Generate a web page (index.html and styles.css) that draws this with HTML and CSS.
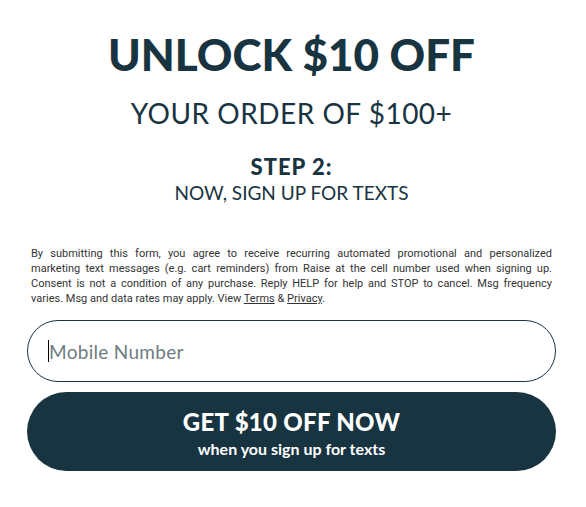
FILE: index.html
```html
<!DOCTYPE html>
<html>
<head>
<meta charset="utf-8">
<link rel="stylesheet" href="styles.css">
</head>
<body>
<div class="popup">
  <h1 class="title">UNLOCK $10 OFF</h1>
  <p class="subtitle">YOUR ORDER OF $100+</p>
  <p class="step">STEP 2:</p>
  <p class="step-sub">NOW, SIGN UP FOR TEXTS</p>
  <p class="legal">
    <span class="line">By submitting this form, you agree to receive recurring automated promotional and personalized</span>
    <span class="line">marketing text messages (e.g. cart reminders) from Raise at the cell number used when signing up.</span>
    <span class="line">Consent is not a condition of any purchase. Reply HELP for help and STOP to cancel. Msg frequency</span>
    <span class="line last">varies. Msg and data rates may apply. View <a href="#">Terms</a> &amp; <a href="#">Privacy</a>.</span>
  </p>
  <div class="field"><span class="caret"></span><span class="placeholder">Mobile Number</span></div>
  <button class="cta"><span class="cta-main">GET $10 OFF NOW</span><span class="cta-sub">when you sign up for texts</span></button>
</div>
</body>
</html>
```
FILE: styles.css
```css
html, body { margin: 0; padding: 0; background: #fff; }
body { font-family: "Lato", "Open Sans", sans-serif; color: #193441; }
.popup { width: 529px; padding: 0 30px 0 27px; display: flex; flex-direction: column; align-items: stretch; }
.title { margin: 28px 0 0; text-align: center; font-size: 44px; font-weight: 900; line-height: 52px; }
.subtitle { margin: 16px 0 0; text-align: center; font-size: 28px; font-weight: 400; line-height: 34px; letter-spacing: 0.5px; }
.step { margin: 24px 0 0; text-align: center; font-size: 22px; font-weight: 900; line-height: 26px; letter-spacing: 1px; }
.step-sub { margin: 1px 0 0; text-align: center; font-size: 19px; font-weight: 400; line-height: 24px; }
.legal { margin: 41px 4px 0; font-family: "Roboto", sans-serif; font-size: 11px; line-height: 15px; color: #333; }
.legal .line { display: block; text-align: justify; text-align-last: justify; white-space: nowrap; }
.legal .line.last { text-align-last: left; }
.legal a { color: #333; }
.field { box-sizing: border-box; margin-top: 14px; height: 62px; border: 1px solid #193441; border-radius: 31px; display: flex; align-items: center; padding-left: 20px; }
.caret { width: 1px; height: 22px; background: #000; }
.placeholder { font-size: 19px; color: #6f7c82; letter-spacing: 0.3px; }
.cta { margin-top: 10px; height: 79px; border: 0; padding: 4px 0 0; border-radius: 40px; background: #193441; color: #fff; display: flex; flex-direction: column; align-items: center; justify-content: center; gap: 3px; font-family: "Lato", sans-serif; }
.cta-main { font-size: 24px; font-weight: 900; line-height: 28px; letter-spacing: 0.3px; }
.cta-sub { font-size: 16px; font-weight: 700; line-height: 20px; }
```
